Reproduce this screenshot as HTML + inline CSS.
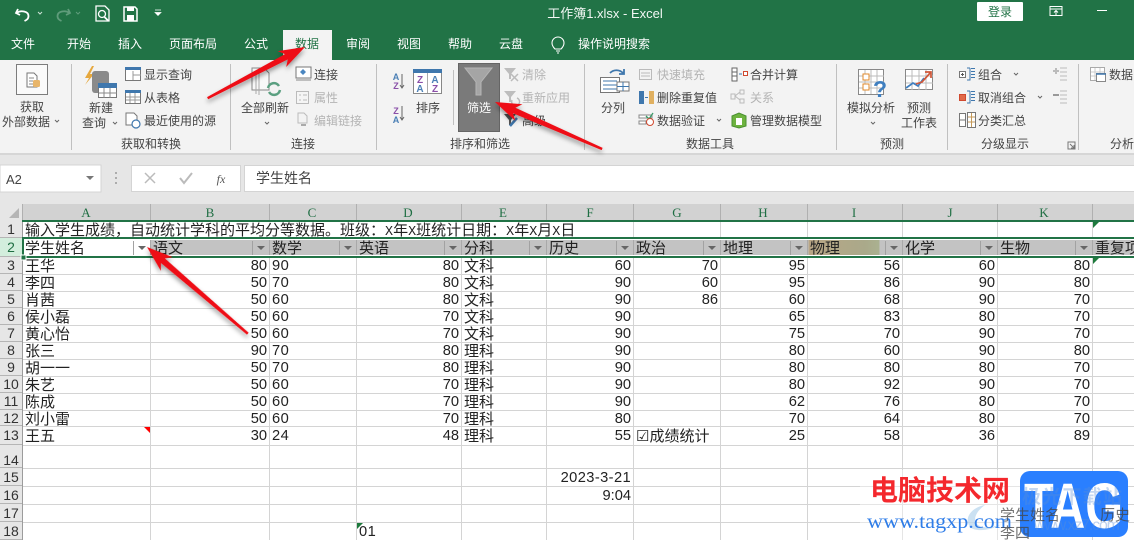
<!DOCTYPE html>
<html><head><meta charset="utf-8"><style>
html,body{margin:0;padding:0;background:#fff}
#p{position:relative;width:1134px;height:540px;overflow:hidden;background:#e6e6e6;font-family:"Liberation Sans","Noto Sans CJK SC",sans-serif}
svg{position:absolute;left:0;top:0}
table{position:absolute;left:22px;top:221px;border-collapse:collapse;table-layout:fixed;width:1112px;background:#fff;font-size:15px;color:#222}
td{border:1px solid #d4d4d4;padding:1px 2px 0;height:0;white-space:nowrap;overflow:visible;line-height:13px;box-sizing:border-box;font-family:"Liberation Sans","WenQuanYi Zen Hei","Noto Sans CJK SC",sans-serif;vertical-align:middle}
td.n{text-align:right;font-size:14.67px}
td.m{letter-spacing:.5px;font-size:14.67px}
td i{font:normal 13.4px/10px "Liberation Mono",monospace}
tr.h td{background:#c3c3c3;border-color:#a9a9a9;position:relative;padding-top:1px}
tr.h td.w{background:#fff}
#rh{position:absolute;left:0;top:221px;width:22px;background:#e6e6e6;border-right:1px solid #9c9c9c;height:319px}
#rh div{position:absolute;left:0;width:22px;text-align:center;font-size:14px;color:#333;border-bottom:1px solid #b5b5b5;box-sizing:border-box;line-height:16px}
text{font-family:"Liberation Sans","Noto Sans CJK SC",sans-serif}
.t{font-size:12px;fill:#444;text-anchor:middle}
.l{font-size:12px;fill:#444}
.d{font-size:12px;fill:#b4b4b4}
.tab{font-size:12px;fill:#fff;text-anchor:middle}
.c{font-size:13px;fill:#1f6e43;text-anchor:middle;font-family:"Liberation Serif",serif}
.g{font-size:15px;fill:#444;opacity:.75;font-family:"Liberation Sans","WenQuanYi Zen Hei","Noto Sans CJK SC",sans-serif}
</style></head><body><div id="p">

<table>
<colgroup><col style="width:128px"><col style="width:119px"><col style="width:87px"><col style="width:105px"><col style="width:85px"><col style="width:87px"><col style="width:87px"><col style="width:87px"><col style="width:95px"><col style="width:95px"><col style="width:95px"><col style="width:42px"></colgroup>
<tr style="height:17px"><td colspan="6">输入学生成绩，自动统计学科的平均分等数据。班级：<i>X</i>年<i>X</i>班统计日期：<i>X</i>年<i>X</i>月<i>X</i>日</td><td></td><td></td><td></td><td></td><td></td><td></td></tr>
<tr class="h" style="height:19px"><td class="w">学生姓名</td><td>语文</td><td>数学</td><td>英语</td><td>分科</td><td>历史</td><td>政治</td><td>地理</td><td style="background:linear-gradient(90deg,#b8a585,#aaa98a 60%,#aab190 75%,#c3c3c3 76%)">物理</td><td>化学</td><td>生物</td><td>重复项</td></tr>
<tr style="height:17px"><td>王华</td><td class="n">80</td><td class="m">90</td><td class="n">80</td><td>文科</td><td class="n">60</td><td class="n">70</td><td class="n">95</td><td class="n">56</td><td class="n">60</td><td class="n">80</td><td></td></tr>
<tr style="height:17px"><td>李四</td><td class="n">50</td><td class="m">70</td><td class="n">80</td><td>文科</td><td class="n">90</td><td class="n">60</td><td class="n">95</td><td class="n">86</td><td class="n">90</td><td class="n">80</td><td></td></tr>
<tr style="height:17px"><td>肖茜</td><td class="n">50</td><td class="m">60</td><td class="n">80</td><td>文科</td><td class="n">90</td><td class="n">86</td><td class="n">60</td><td class="n">68</td><td class="n">90</td><td class="n">70</td><td></td></tr>
<tr style="height:17px"><td>侯小磊</td><td class="n">50</td><td class="m">60</td><td class="n">70</td><td>文科</td><td class="n">90</td><td></td><td class="n">65</td><td class="n">83</td><td class="n">80</td><td class="n">70</td><td></td></tr>
<tr style="height:17px"><td>黄心怡</td><td class="n">50</td><td class="m">60</td><td class="n">70</td><td>文科</td><td class="n">90</td><td></td><td class="n">75</td><td class="n">70</td><td class="n">90</td><td class="n">70</td><td></td></tr>
<tr style="height:17px"><td>张三</td><td class="n">90</td><td class="m">70</td><td class="n">80</td><td>理科</td><td class="n">90</td><td></td><td class="n">80</td><td class="n">60</td><td class="n">90</td><td class="n">80</td><td></td></tr>
<tr style="height:17px"><td>胡一一</td><td class="n">50</td><td class="m">70</td><td class="n">80</td><td>理科</td><td class="n">90</td><td></td><td class="n">80</td><td class="n">80</td><td class="n">80</td><td class="n">70</td><td></td></tr>
<tr style="height:17px"><td>朱艺</td><td class="n">50</td><td class="m">60</td><td class="n">70</td><td>理科</td><td class="n">90</td><td></td><td class="n">80</td><td class="n">92</td><td class="n">90</td><td class="n">70</td><td></td></tr>
<tr style="height:17px"><td>陈成</td><td class="n">50</td><td class="m">60</td><td class="n">70</td><td>理科</td><td class="n">90</td><td></td><td class="n">62</td><td class="n">76</td><td class="n">80</td><td class="n">70</td><td></td></tr>
<tr style="height:16px"><td>刘小雷</td><td class="n">50</td><td class="m">60</td><td class="n">70</td><td>理科</td><td class="n">80</td><td></td><td class="n">70</td><td class="n">64</td><td class="n">80</td><td class="n">70</td><td></td></tr>
<tr style="height:19px"><td>王五</td><td class="n">30</td><td class="m">24</td><td class="n">48</td><td>理科</td><td class="n">55</td><td>☑成绩统计</td><td class="n">25</td><td class="n">58</td><td class="n">36</td><td class="n">89</td><td></td></tr>
<tr style="height:23px"><td></td><td></td><td></td><td></td><td></td><td></td><td></td><td></td><td></td><td></td><td></td><td></td></tr>
<tr style="height:18px"><td></td><td></td><td></td><td></td><td></td><td class="n" style="letter-spacing:.4px">2023-3-21</td><td></td><td></td><td></td><td></td><td></td><td></td></tr>
<tr style="height:18px"><td></td><td></td><td></td><td></td><td></td><td class="n">9:04</td><td></td><td></td><td></td><td></td><td></td><td></td></tr>
<tr style="height:18px"><td></td><td></td><td></td><td></td><td></td><td></td><td></td><td></td><td></td><td></td><td></td><td></td></tr>
<tr style="height:18px"><td></td><td></td><td></td><td class="m">01</td><td></td><td></td><td></td><td></td><td></td><td></td><td></td><td></td></tr>
</table>

<div id="rh">
<div style="top:0;height:17px">1</div>
<div style="top:17px;height:19px;background:#d3eedd;color:#1f6e43;padding-top:1px">2</div>
<div style="top:36px;height:17px">3</div>
<div style="top:53px;height:17px">4</div>
<div style="top:70px;height:17px">5</div>
<div style="top:87px;height:17px">6</div>
<div style="top:104px;height:17px">7</div>
<div style="top:121px;height:17px">8</div>
<div style="top:138px;height:17px">9</div>
<div style="top:155px;height:17px">10</div>
<div style="top:172px;height:17px">11</div>
<div style="top:189px;height:16px">12</div>
<div style="top:205px;height:19px;padding-top:1px">13</div>
<div style="top:224px;height:23px;padding-top:7px">14</div>
<div style="top:247px;height:18px;padding-top:1px">15</div>
<div style="top:265px;height:18px;padding-top:1px">16</div>
<div style="top:283px;height:18px;padding-top:1px">17</div>
<div style="top:301px;height:18px;padding-top:1px">18</div>
</div>

<svg width="1134" height="540" viewBox="0 0 1134 540">
<defs><filter id="s" x="-20%" y="-20%" width="140%" height="140%"><feDropShadow dx="0" dy="3" stdDeviation="2.500" flood-color="#000" flood-opacity=".4"/></filter></defs>

<!-- title bar -->
<rect width="1134" height="60" fill="#217346"/>
<rect x="283" y="30" width="49" height="30" fill="#f3f3f3"/>
<path d="M18 9 l-2 4 4 2 M16.500 13 c4-3 12-2 12 3 0 3-2 4-4 5" fill="none" stroke="#fff" stroke-width="1.800"/>
<path d="M38 12l2 2 2-2" fill="none" stroke="#cfe3d7"/>
<path d="M68 9 l2 4-4 2 M69.500 13 c-4-3-12-2-12 3 0 3 2 4 4 5" fill="none" stroke="#5f9c7b" stroke-width="1.800"/>
<path d="M76 12l2 2 2-2" fill="none" stroke="#5f9c7b"/>
<path d="M96 6h9l4 4v11H96z" fill="none" stroke="#fff" stroke-width="1.300"/><circle cx="102" cy="14" r="3.500" fill="none" stroke="#fff" stroke-width="1.300"/><path d="M104.500 17l4 4" stroke="#fff" stroke-width="1.800"/>
<path d="M124 7h11l2 2v12h-13z" fill="none" stroke="#fff" stroke-width="1.500"/><rect x="127" y="7" width="7" height="4" fill="#fff"/><rect x="127" y="15" width="7" height="6" fill="#fff"/>
<path d="M155 10h6M155 12.500h6l-3 3z" fill="#fff" stroke="#fff" stroke-width=".7"/>
<text x="605" y="18" text-anchor="middle" style="font-size:13px;fill:#f2f7f4">工作簿1.xlsx  -  Excel</text>
<rect x="977" y="2" width="46" height="19" rx="1" fill="#fff"/>
<text x="1000" y="16" text-anchor="middle" style="font-size:12px;fill:#217346">登录</text>
<path d="M1050 6.500h12v9h-12zM1050 9h12M1056 15v-4M1054 12.500l2-2 2 2" fill="none" stroke="#fff"/>
<path d="M1097 10.500h10" stroke="#fff"/>
<text class="tab" x="23" y="48">文件</text><text class="tab" x="79" y="48">开始</text><text class="tab" x="130" y="48">插入</text><text class="tab" x="193" y="48">页面布局</text><text class="tab" x="256" y="48">公式</text><text class="tab" x="307" y="48" style="fill:#217346">数据</text><text class="tab" x="358" y="48">审阅</text><text class="tab" x="409" y="48">视图</text><text class="tab" x="460" y="48">帮助</text><text class="tab" x="511" y="48">云盘</text>
<path d="M555 49c-3-3-3-5-3-6a6 6 0 0 1 12 0c0 1 0 3-3 6zM556 51h4M557 53h2" fill="none" stroke="#fff" stroke-width="1.100"/>
<text class="tab" x="614" y="48">操作说明搜索</text>

<!-- ribbon -->
<rect y="60" width="1134" height="93" fill="#f3f3f3"/>
<rect y="153" width="1134" height="2" fill="#d6d6d6"/>
<g fill="#c0c0c0"><rect x="71" y="64" width="1" height="86"/><rect x="230" y="64" width="1" height="86"/><rect x="376" y="64" width="1" height="86"/><rect x="453" y="70" width="1" height="55"/><rect x="584" y="64" width="1" height="86"/><rect x="836" y="64" width="1" height="86"/><rect x="947" y="64" width="1" height="86"/><rect x="1078" y="64" width="1" height="86"/></g>

<!-- get data -->
<rect x="16.500" y="64.500" width="31" height="30" fill="#fafafa" stroke="#7c7c7c"/>
<path d="M27 73h7l3 3v11H27z" fill="#fff" stroke="#777"/><path d="M29 78h5M29 81h4M29 84h4" stroke="#888"/><rect x="33" y="80" width="7" height="7" rx="1.500" fill="#e8b56a"/>
<text class="t" x="32" y="111">获取</text><text class="t" x="26" y="126">外部数据</text><path d="M55 120l2 2 2-2" fill="none" stroke="#666"/>
<path d="M92 66l-7 12h4l-4 7 9-11h-4l4-8z" fill="#e6a83e"/>
<rect x="92" y="71" width="17" height="22" rx="3" fill="#8a8a8a"/>
<rect x="98.500" y="83.500" width="18" height="14" fill="#fff" stroke="#777"/><rect x="98" y="83" width="19" height="5" fill="#3f77ad"/><path d="M104 88v10M110 88v10M99 93h18" stroke="#888"/>
<text class="t" x="101" y="112">新建</text><text class="t" x="94" y="127">查询</text><path d="M113 122l2 2 2-2" fill="none" stroke="#666"/>
<rect x="125.500" y="67.500" width="15" height="13" fill="#fff" stroke="#777"/><rect x="125" y="67" width="16" height="3" fill="#3f77ad"/><path d="M133 71v9M133 75h8" stroke="#999"/>
<text class="l" x="144" y="79">显示查询</text>
<rect x="125.500" y="90.500" width="15" height="13" fill="#fff" stroke="#777"/><rect x="125" y="90" width="16" height="3" fill="#3f77ad"/><path d="M130 93v10M135 93v10M126 97h14M126 100h14" stroke="#999"/>
<text class="l" x="144" y="102">从表格</text>
<path d="M126 113h8l3 3v9h-11z" fill="#fff" stroke="#777"/><circle cx="136" cy="124" r="4" fill="#fff" stroke="#3f77ad" stroke-width="1.200"/>
<text class="l" x="144" y="125">最近使用的源</text>
<text class="t" x="151" y="148">获取和转换</text>

<!-- connections -->
<path d="M252 68h12l5 5v17h-17z" fill="#f8f8f8" stroke="#888"/><path d="M256 72v22M259 70v25" stroke="#aaa"/>
<path d="M268 88a6 6 0 0 1 11-2M280 90a6 6 0 0 1-11 2" fill="none" stroke="#5a9f80" stroke-width="2.500"/>
<text class="t" x="265" y="112">全部刷新</text><path d="M265 122l2 2 2-2" fill="none" stroke="#666"/>
<rect x="296" y="67" width="15" height="11" fill="#fff" stroke="#777"/><path d="M303 69l3 3-3 3-3-3z" fill="#4a86c0"/><path d="M296 80h15" stroke="#888"/>
<text class="l" x="314" y="79">连接</text>
<rect x="296.500" y="91.500" width="12" height="12" fill="#f5f5f5" stroke="#bbb"/><path d="M299 95h2M303 95h4M299 100h2M303 100h4" stroke="#bbb"/>
<text class="d" x="314" y="102">属性</text>
<path d="M298 113h6l3 3v7h-9z" fill="none" stroke="#bbb"/><path d="M301 125h5" stroke="#aaa" stroke-width="2"/>
<text class="d" x="314" y="125">编辑链接</text>
<text class="t" x="303" y="148">连接</text>

<!-- sort -->
<text x="396" y="80" text-anchor="middle" style="font-size:9px;font-weight:bold;fill:#4a7fb5">A</text><text x="396" y="89" text-anchor="middle" style="font-size:9px;font-weight:bold;fill:#8a4fa8">Z</text><path d="M402 74v13M400 85l2 3 2-3" fill="none" stroke="#666"/>
<text x="396" y="114" text-anchor="middle" style="font-size:9px;font-weight:bold;fill:#8a4fa8">Z</text><text x="396" y="123" text-anchor="middle" style="font-size:9px;font-weight:bold;fill:#4a7fb5">A</text><path d="M402 106v13M400 117l2 3 2-3" fill="none" stroke="#666"/>
<rect x="413.500" y="69.500" width="28" height="24" fill="#fff" stroke="#888"/><rect x="413" y="69" width="29" height="4" fill="#3f77ad"/><path d="M427.500 73v20" stroke="#aaa"/>
<text x="420" y="83" text-anchor="middle" style="font-size:10px;font-weight:bold;fill:#8a4fa8">Z</text><text x="420" y="92" text-anchor="middle" style="font-size:10px;font-weight:bold;fill:#4a7fb5">A</text><text x="435" y="83" text-anchor="middle" style="font-size:10px;font-weight:bold;fill:#4a7fb5">A</text><text x="435" y="92" text-anchor="middle" style="font-size:10px;font-weight:bold;fill:#8a4fa8">Z</text>
<text class="t" x="428" y="112">排序</text>
<rect x="458.500" y="63.500" width="41" height="68" fill="#7a7a7a" stroke="#656565"/>
<path d="M465 68h27l-11 14v13h-5V82z" fill="#a5a5a5" stroke="#b5b5b5"/>
<text x="479" y="112" text-anchor="middle" style="font-size:12px;fill:#fff">筛选</text>
<path d="M504 68h12l-5 6v5h-2v-5z" fill="#bdbdbd"/><path d="M511 74l7 7M518 74l-7 7" stroke="#bbb" stroke-width="1.500"/>
<text class="d" x="522" y="79">清除</text>
<path d="M504 91h12l-5 6v5h-2v-5z" fill="#bdbdbd"/><path d="M512 100a4 4 0 1 0 5-2" fill="none" stroke="#bbb" stroke-width="1.500"/>
<text class="d" x="522" y="102">重新应用</text>
<path d="M504 114h12l-5 6v5h-2v-5z" fill="#555"/><path d="M510 126l7-8" stroke="#3f77ad" stroke-width="2.500"/>
<text class="l" x="522" y="125">高级</text>
<text class="t" x="480" y="148">排序和筛选</text>

<!-- data tools -->
<rect x="600.500" y="77.500" width="19" height="15" fill="#fff" stroke="#777"/><path d="M603 81h14M603 85h14M603 89h14" stroke="#3f77ad"/>
<rect x="617" y="82" width="12" height="9" fill="#fff" stroke="#777"/><path d="M623 82v9M617 86.500h12" stroke="#3f77ad"/>
<path d="M610 73a9 9 0 0 1 13 0M624 69v5h-5" fill="none" stroke="#3f77ad" stroke-width="1.800"/>
<text class="t" x="613" y="112">分列</text>
<rect x="639.500" y="69.500" width="12" height="10" fill="#f3f3f3" stroke="#bbb"/><path d="M641 73h9M641 76h9" stroke="#bbb"/>
<text class="d" x="657" y="79">快速填充</text>
<rect x="639" y="91" width="5" height="13" fill="#3f77ad"/><rect x="649" y="91" width="5" height="13" fill="#e0b060"/><path d="M645 97.500h3" stroke="#3f77ad"/>
<text class="l" x="657" y="102">删除重复值</text>
<rect x="639" y="115" width="13" height="3" fill="#fff" stroke="#888"/><rect x="639" y="121" width="7" height="3" fill="#fff" stroke="#888"/><path d="M646 116l3 3 4-6" fill="none" stroke="#3a9a68" stroke-width="1.300"/><circle cx="650" cy="122" r="3.500" fill="#fff" stroke="#d0492f"/>
<text class="l" x="657" y="125">数据验证</text><path d="M717 119l2 2 2-2" fill="none" stroke="#666"/>
<rect x="732" y="68" width="5" height="13" fill="#fff" stroke="#666"/><path d="M732 72h5M732 76h5" stroke="#666"/><path d="M739 74h3" stroke="#3f77ad"/><rect x="743.500" y="71.500" width="4" height="4" fill="#fff" stroke="#d0492f"/>
<text class="l" x="750" y="79">合并计算</text>
<path d="M735 96l5-4M735 96l5 4" fill="none" stroke="#bbb"/><rect x="731" y="94" width="4" height="5" fill="none" stroke="#bbb"/><rect x="740" y="90" width="4" height="4" fill="none" stroke="#bbb"/><rect x="740" y="99" width="4" height="4" fill="none" stroke="#bbb"/>
<text class="d" x="750" y="102">关系</text>
<path d="M732 116l7-3 7 3v10l-7 2-7-2z" fill="#6db33f" stroke="#4a9030"/><path d="M736 118h6v7h-6z" fill="#fff"/>
<text class="l" x="750" y="125">管理数据模型</text>
<text class="t" x="710" y="148">数据工具</text>

<!-- forecast -->
<rect x="858.500" y="69.500" width="25" height="25" fill="#fff" stroke="#888"/><path d="M865 70v24M871 70v24M877 70v24M859 76h25M859 82h25M859 88h25" stroke="#bbb"/>
<rect x="863" y="74" width="6" height="6" fill="#fff" stroke="#e08a2c"/><rect x="863" y="84" width="6" height="6" fill="#fff" stroke="#e08a2c"/>
<text x="880" y="97" text-anchor="middle" style="font-size:23px;font-weight:bold;fill:#3f7fc0">?</text>
<text class="t" x="871" y="112">模拟分析</text><path d="M871 122l2 2 2-2" fill="none" stroke="#666"/>
<rect x="905.500" y="69.500" width="27" height="20" fill="#fff" stroke="#888"/><path d="M912 70v20M919 70v20M926 70v20M906 76h27M906 83h27" stroke="#bbb"/>
<path d="M906 88l7-5 5 3 6-8" fill="none" stroke="#3f7fc0" stroke-width="1.700"/><path d="M916 84l6-2 9-10M925 72h6v6" fill="none" stroke="#d0583a" stroke-width="1.700"/>
<text class="t" x="919" y="112">预测</text><text class="t" x="919" y="127">工作表</text>
<text class="t" x="892" y="148">预测</text>

<!-- outline -->
<rect x="959.500" y="71.500" width="6" height="6" fill="#fff" stroke="#777"/><path d="M961 74.500h3M962.500 73v3" stroke="#555"/><path d="M970 68v12h-3M970 68h-3M971 68.500h4M971 71.500h4M971 74.500h4M971 77.500h4" fill="none" stroke="#3f77ad"/>
<text class="l" x="978" y="79">组合</text><path d="M1014 73l2 2 2-2" fill="none" stroke="#666"/>
<rect x="959.500" y="94.500" width="6" height="6" fill="#e06a4a" stroke="#d0492f"/><path d="M970 91v12h-3M970 91h-3M971 91.500h4M971 94.500h4M971 97.500h4M971 100.500h4" fill="none" stroke="#3f77ad"/>
<text class="l" x="978" y="102">取消组合</text><path d="M1038 96l2 2 2-2" fill="none" stroke="#666"/>
<rect x="959.500" y="113.500" width="6" height="13" fill="#fff" stroke="#777"/><path d="M959 120h7" stroke="#777"/><rect x="967.500" y="112.500" width="8" height="15" fill="#fff" stroke="#777"/><path d="M971.500 113v14M968 117h7M968 122h7" stroke="#c49a5a"/>
<text class="l" x="978" y="125">分类汇总</text>
<path d="M1053 71h6M1056 68v6" stroke="#bbb" stroke-width="2"/><path d="M1060 68h7M1060 72h7M1060 76h7M1060 80h7" stroke="#bbb"/>
<path d="M1053 95h6" stroke="#999" stroke-width="2"/><path d="M1060 91h7M1060 95h7M1060 99h7M1060 103h7" stroke="#bbb"/>
<text class="t" x="1005" y="148">分级显示</text>
<path d="M1068 142h7v7h-7zM1070 144l4 4M1074 145v3h-3" fill="none" stroke="#777"/>
<rect x="1090.500" y="67.500" width="14" height="13" fill="#fff" stroke="#aaa"/><path d="M1095 68v12M1100 68v12M1091 72h13M1091 76h13" stroke="#ccc"/><rect x="1096.500" y="73.500" width="9" height="8" fill="#fff" stroke="#888"/><path d="M1096 74h10" stroke="#3f77ad" stroke-width="1.500"/>
<text class="l" x="1109" y="79">数据</text>
<text class="t" x="1122" y="148">分析</text>

<!-- formula bar -->
<rect x="0" y="165" width="101" height="27" fill="#fff" stroke="#d4d4d4"/>
<text x="6" y="184" style="font-size:13px;fill:#444">A2</text>
<path d="M86 176h8l-4 4z" fill="#777"/>
<path d="M116 172v2M116 177v2M116 182v2" stroke="#999" stroke-width="1.500"/>
<rect x="131.500" y="165.500" width="109" height="26" fill="#fff" stroke="#d4d4d4"/>
<path d="M145 173l10 10M155 173l-10 10" stroke="#bbb" stroke-width="1.500"/>
<path d="M180 178l4 5 8-10" fill="none" stroke="#bbb" stroke-width="2"/>
<text x="221" y="183" text-anchor="middle" style="font:italic 12px 'Liberation Serif',serif;fill:#555">fx</text>
<rect x="244.500" y="165.500" width="890" height="26" fill="#fff" stroke="#d4d4d4"/>
<text x="256" y="183" style="font-size:14px;fill:#444">学生姓名</text>

<!-- column headers -->
<rect x="0" y="204" width="1134" height="17" fill="#d2d2d2"/>
<rect x="0" y="204" width="22" height="17" fill="#e6e6e6"/>
<path d="M19 218V208L9 218z" fill="#b5b5b5"/>
<path d="M22.500 204v17M150.500 204v17M269.500 204v17M356.500 204v17M461.500 204v17M546.500 204v17M633.500 204v17M720.500 204v17M807.500 204v17M902.500 204v17M997.500 204v17M1092.500 204v17" stroke="#b0b0b0"/>
<text class="c" x="86" y="217">A</text><text class="c" x="210" y="217">B</text><text class="c" x="312" y="217">C</text><text class="c" x="408" y="217">D</text><text class="c" x="503" y="217">E</text><text class="c" x="590" y="217">F</text><text class="c" x="677" y="217">G</text><text class="c" x="763" y="217">H</text><text class="c" x="854" y="217">I</text><text class="c" x="950" y="217">J</text><text class="c" x="1044" y="217">K</text>

<!-- filter buttons -->
<path d="M133.500 241v14M252.500 241v14M339.500 241v14M444.500 241v14M529.500 241v14M616.500 241v14M703.500 241v14M790.500 241v14M885.500 241v14M980.500 241v14M1075.500 241v14" stroke="#a2a2a2"/>
<path d="M138 246h8l-4 4zM257 246h8l-4 4zM344 246h8l-4 4zM449 246h8l-4 4zM534 246h8l-4 4zM621 246h8l-4 4zM708 246h8l-4 4zM795 246h8l-4 4zM890 246h8l-4 4zM985 246h8l-4 4zM1080 246h8l-4 4z" fill="#666"/>

<!-- selection -->
<rect x="22" y="239" width="1112" height="1" fill="#fff"/>
<rect x="22" y="255" width="1112" height="1" fill="#fff"/>
<rect x="22" y="220" width="1112" height="2" fill="#217346"/>
<rect x="22" y="237" width="1112" height="2" fill="#217346"/>
<rect x="22" y="256" width="1112" height="2" fill="#217346"/>
<rect x="22" y="238" width="2" height="20" fill="#217346"/>
<rect x="21" y="255" width="5" height="5" fill="#217346" stroke="#fff"/>
<path d="M1093 222h6l-6 6zM1093 258h6l-6 6zM357 523h6l-6 6z" fill="#1e7a3c"/>
<path d="M144 427h6v6z" fill="#f00"/>

<!-- watermark -->
<path d="M860 470H1020V540H860z" fill="#fff" opacity=".4"/>
<path d="M985 505c-12 2-22 12-15 22 5 5 20 4 32-3-10 4-22 5-26-1-3-6 2-13 9-18z" fill="#a9cdea" opacity=".6"/>
<text x="870" y="500" style="font-size:28px;font-weight:bold;fill:#f4282d">电脑技术网</text>
<text x="867" y="528" textLength="145" lengthAdjust="spacingAndGlyphs" style="font:20px 'Liberation Serif',serif;fill:#2f7de8">www.tagxp.com</text>
<rect x="1020" y="471" width="108" height="66" rx="10" fill="#2a7fff"/>
<text x="1024" y="528" textLength="99" lengthAdjust="spacingAndGlyphs" style="font-size:64px;font-weight:bold;fill:#fff">TAG</text>
<text x="1022" y="503" textLength="100" lengthAdjust="spacing" style="font-size:19px;font-weight:bold;fill:#5b8fd6;opacity:.35">极光下载站</text>
<text x="1034" y="530" textLength="86" lengthAdjust="spacing" style="font-size:16px;fill:#5b8fd6;opacity:.4">www.xz7.com</text>
<text class="g" x="1000" y="520">学生姓名</text>
<text class="g" x="1100" y="520">历史</text>
<text class="g" x="1000" y="538">李四</text>

<!-- arrows -->
<g fill="#ee0f14" filter="url(#s)">
<polygon transform="translate(305 47) rotate(152.300)" points="0,0 26,-9 21,-3 110,-1.200 110,1.200 21,3 26,9"/>
<polygon transform="translate(495 102) rotate(23.700)" points="0,0 26,-9 21,-3 117,-1.200 117,1.200 21,3 26,9"/>
<polygon transform="translate(147 247) rotate(40.700)" points="0,0 26,-9 21,-3 133,-1.200 133,1.200 21,3 26,9"/>
</g>
</svg>
</div></body></html>
